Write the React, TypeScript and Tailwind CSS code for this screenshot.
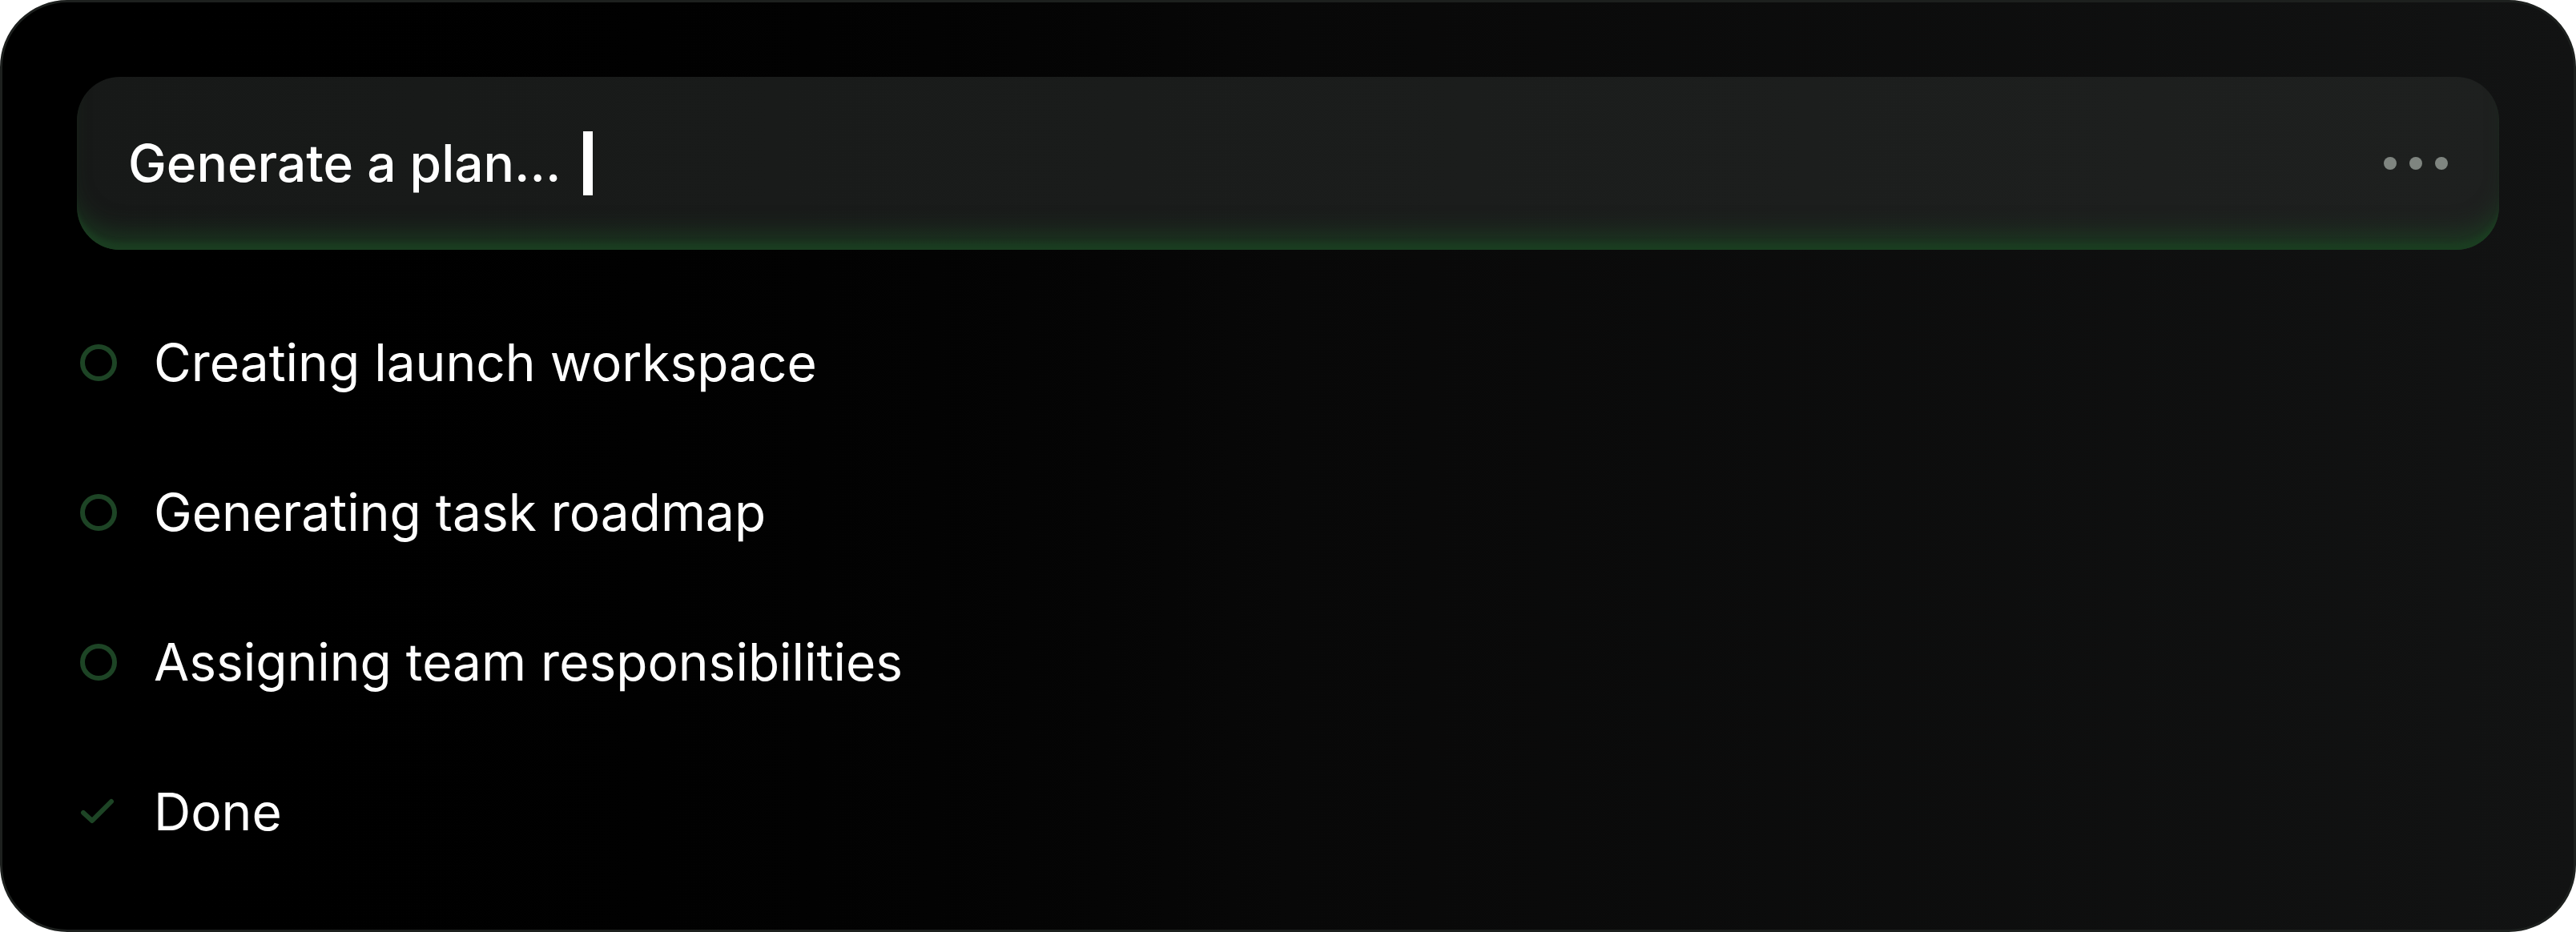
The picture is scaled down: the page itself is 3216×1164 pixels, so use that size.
import React from "react";

const items = [
  { label: "Creating launch workspace", done: false },
  { label: "Generating task roadmap", done: false },
  { label: "Assigning team responsibilities", done: false },
  { label: "Done", done: true },
];

function CircleIcon() {
  return (
    <svg width="48" height="48" viewBox="0 0 48 48" className="shrink-0">
      <circle cx="24" cy="24" r="20" fill="none" stroke="#1d4425" strokeWidth="6" />
    </svg>
  );
}

function CheckIcon() {
  return (
    <svg width="48" height="48" viewBox="0 0 48 48" className="shrink-0">
      <path d="M5 25 L16 35 L40 11" fill="none" stroke="#1d4425" strokeWidth="6" strokeLinecap="round" strokeLinejoin="round" />
    </svg>
  );
}

export default function App() {
  return (
    <div className="w-[3216px] h-[1164px] bg-white" style={{ fontFamily: "Inter, 'Noto Sans', sans-serif" }}>
      <div className="w-full h-full rounded-[84px] border-[3px] border-[#1d201e] bg-gradient-to-r from-black via-[#080808] to-[#121313] px-[93px] pt-[93px] overflow-hidden">
        <div className="h-[216px] rounded-[54px] bg-gradient-to-r from-[#171918] to-[#1e201f] shadow-[inset_0_-12px_6px_-4px_#1b3d21,inset_0_-36px_30px_-16px_rgba(28,68,35,0.7)] flex items-center pl-[64px] pr-[64px]">
          <span className="text-white text-[64px] font-medium leading-none">Generate a plan...</span>
          <div className="ml-[28px] w-[12px] h-[80px] bg-white" />
          <div className="ml-auto flex items-center gap-[16px]">
            <div className="w-[16px] h-[16px] rounded-full bg-[#7f8580]" />
            <div className="w-[16px] h-[16px] rounded-full bg-[#7f8580]" />
            <div className="w-[16px] h-[16px] rounded-full bg-[#7f8580]" />
          </div>
        </div>
        <div className="mt-[47px] flex flex-col">
          {items.map((it) => (
            <div key={it.label} className="h-[187px] flex items-center pl-[3px]">
              {it.done ? <CheckIcon /> : <CircleIcon />}
              <span className="ml-[45px] text-white text-[64px] leading-none">{it.label}</span>
            </div>
          ))}
        </div>
      </div>
    </div>
  );
}
